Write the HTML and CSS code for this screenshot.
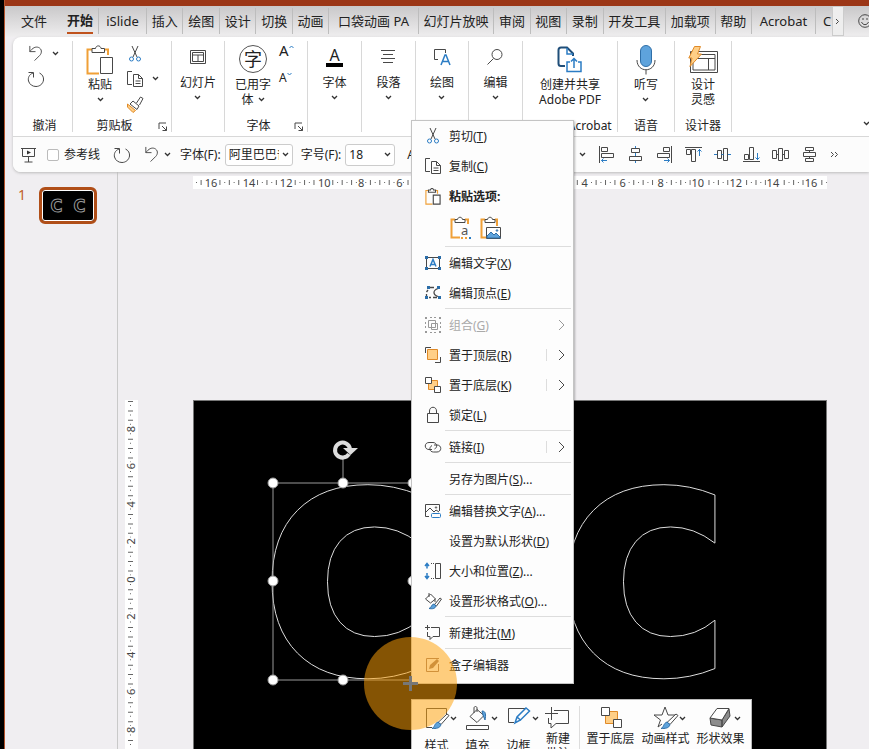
FILE: index.html
```html
<!DOCTYPE html>
<html lang="zh-CN">
<head>
<meta charset="utf-8">
<title>演示文稿</title>
<link rel="stylesheet" href="styles.css">
</head>
<body>
<svg class="sprite" aria-hidden="true">
  <symbol id="chev" viewBox="0 0 7 5"><path d="M1 1l2.500 2.500L6 1" stroke="#333" stroke-width="1.300"/></symbol>
  <symbol id="undo" viewBox="0 0 18 18"><path d="M3 1v6h6M3 7C6 3 9 1.500 12 2.500c4 1.500 4 6 1.500 8.500L8 16.500"/></symbol>
  <symbol id="redo" viewBox="0 0 18 18"><path d="M1.500 2.500h5v5M6 3C2 4.500.8 8 1.500 11c1 3.500 4 5.500 7.500 5.500s7-2.500 7.500-6.500c.3-3-1-5.500-4-7"/></symbol>
  <symbol id="cut" viewBox="0 0 18 18"><path d="M6 1l5 11M12 1L7 12"/><circle class="b" cx="5.500" cy="14" r="2"/><circle class="b" cx="12.500" cy="14" r="2"/></symbol>
  <symbol id="copy" viewBox="0 0 18 18"><path d="M6 14.500H1.500v-13H6M7.500 4.500h5l4 4v8h-9zM12.500 4.500v4h4M9.500 11h5M9.500 13.500h5"/></symbol>
  <symbol id="paste" viewBox="0 0 28 30"><path class="o" d="M8 4.500H1.500v24H13M19 4.500h3V10"/><path class="w" d="M6 7.500v-4h3.500C10 0 14.500 0 15 3.500h3.500v4zM14.500 12.500h12v16h-12z"/></symbol>
  <symbol id="brush" viewBox="0 0 18 18"><path class="of" d="M1.500 9l8 6.500L7 17.500 1.500 12z"/><path class="w" d="M7 6l6 5-2 3.500-7-5.500zM10.500 8l4-6 2.500 1.500-3.500 6.500"/></symbol>
  <symbol id="launch" viewBox="0 0 10 10"><path d="M1 7V1h7M4 4l4.500 4.500M8.500 4.500v4h-4"/></symbol>
  <symbol id="order-back" viewBox="0 0 22 22"><path class="of" d="M5.500 5.500h12v12h-12z"/><path class="w" d="M1.500 1.500h8v8h-8zM13.500 13.500h8v8h-8z"/></symbol>
  <symbol id="pen" viewBox="0 0 26 24"><path class="w" d="M23 8l2 1.500-8 9-3-2z"/><path class="bf" d="M14 16l3 2.500c-1 4-5 4-9 4 3-1 2-5 6-6.500z"/></symbol>
</svg>

<div class="app">
  <div class="titlebar"></div>
  <nav class="tabs" aria-label="功能区">
    <button class="tab file">文件</button><button class="tab active"><span>开始</span></button><button class="tab islide">iSlide</button><button class="tab">插入</button><button class="tab">绘图</button><button class="tab">设计</button><button class="tab">切换</button><button class="tab">动画</button><button class="tab pa">口袋动画 PA</button><button class="tab">幻灯片放映</button><button class="tab">审阅</button><button class="tab">视图</button><button class="tab">录制</button><button class="tab">开发工具</button><button class="tab">加载项</button><button class="tab">帮助</button><button class="tab acro">Acrobat</button><button class="tab cut-tab">C</button>
    <button class="more" aria-label="更多"><svg width="5" height="7" viewBox="0 0 5 7"><path d="M1 1l2.500 2.500L1 6"/></svg></button>
    <button class="smile" aria-label="反馈"><svg width="14" height="14" viewBox="0 0 14 14"><circle cx="7" cy="7" r="6.300"/><path d="M3.500 8c1.500 3.500 5.500 3.500 7 0M5 4v2M9 4v2"/></svg></button>
  </nav>

  <div class="card">
    <div class="ribbon">
      <section class="group g-undo">
        <div class="body stack">
          <div class="line"><button class="ic" aria-label="撤消"><svg width="17" height="17"><use href="#undo"/></svg></button><svg class="ch" width="7" height="5"><use href="#chev"/></svg></div>
          <div class="line"><button class="ic" aria-label="重做"><svg width="18" height="18"><use href="#redo"/></svg></button></div>
        </div>
        <h2>撤消</h2>
      </section>
      <section class="group g-clip">
        <div class="body">
          <button class="big"><i><svg width="28" height="30"><use href="#paste"/></svg></i><span>粘贴</span><em><svg width="7" height="5"><use href="#chev"/></svg></em></button>
          <div class="side">
            <div class="line"><button class="ic" aria-label="剪切"><svg width="18" height="18"><use href="#cut"/></svg></button></div>
            <div class="line"><button class="ic" aria-label="复制"><svg width="18" height="18"><use href="#copy"/></svg></button><svg class="ch" width="7" height="5"><use href="#chev"/></svg></div>
            <div class="line"><button class="ic" aria-label="格式刷"><svg width="18" height="18"><use href="#brush"/></svg></button></div>
          </div>
        </div>
        <h2>剪贴板</h2><svg class="launch" width="10" height="10"><use href="#launch"/></svg>
      </section>
      <section class="group g-s">
        <div class="body"><button class="big med"><i><svg width="16" height="14" viewBox="0 0 16 14"><path d="M.5.5h15v13H.5zM2.500 2.500h11v9h-11zM2.500 5h11M8 5v6.500"/></svg></i><span>幻灯片</span><em><svg width="7" height="5"><use href="#chev"/></svg></em></button></div>
      </section>
      <section class="group g-font">
        <div class="body">
          <button class="big"><i class="zi">字</i><span>已用字</span><span>体 <svg width="7" height="5"><use href="#chev"/></svg></span></button>
          <div class="side sizes">
            <button class="ic" aria-label="增大字号">A<svg class="sup" width="5" height="4" viewBox="0 0 5 4"><path class="b" d="M.5 3l2-2 2 2"/></svg></button>
            <button class="ic small" aria-label="减小字号">A<svg class="sup" width="5" height="4" viewBox="0 0 5 4"><path class="b" d="M.5 1l2 2 2-2"/></svg></button>
          </div>
        </div>
        <h2>字体</h2><svg class="launch" width="10" height="10"><use href="#launch"/></svg>
      </section>
      <section class="group g-m">
        <div class="body"><button class="big med"><i><b class="fonta">A</b></i><span>字体</span><em><svg width="7" height="5"><use href="#chev"/></svg></em></button></div>
      </section>
      <section class="group g-m">
        <div class="body"><button class="big med"><i><svg width="16" height="16" viewBox="0 0 16 16"><path d="M1 1.500h14M3 5.500h10M1 9.500h14M3 13.500h10"/></svg></i><span>段落</span><em><svg width="7" height="5"><use href="#chev"/></svg></em></button></div>
      </section>
      <section class="group g-s">
        <div class="body"><button class="big med"><i><svg width="18" height="18" viewBox="0 0 18 18"><path d="M5 11.500H1.500v-10h11V5"/><path class="b mid" d="M8 17l4-10h1l4 10M9.500 13.500h6"/></svg></i><span>绘图</span><em><svg width="7" height="5"><use href="#chev"/></svg></em></button></div>
      </section>
      <section class="group g-m">
        <div class="body"><button class="big med"><i><svg width="18" height="18" viewBox="0 0 18 18"><circle cx="11" cy="6.500" r="5"/><path d="M7.500 10.500L1.500 16.500"/></svg></i><span>编辑</span><em><svg width="7" height="5"><use href="#chev"/></svg></em></button></div>
      </section>
      <section class="group g-pdf">
        <div class="body"><button class="big"><i><svg width="26" height="28" viewBox="0 0 26 28"><path class="navy" d="M8 20H4c-2 0-2.500-1-2.500-2.500V4c0-2 1-2.500 2.500-2.500h6l6 6V10"/><path class="b mid" d="M10 2v6h6M13 16h-3v9.500h14V16h-3M17 22v-9M14 15.500l3-3 3 3"/></svg></i><span>创建并共享</span><span>Adobe PDF</span></button></div>
        <h2>Adobe Acrobat</h2>
      </section>
      <section class="group g-mic">
        <div class="body"><button class="big"><i><svg width="20" height="30" viewBox="0 0 20 30"><rect class="bf" x="4.500" y=".5" width="11" height="21" rx="5.500"/><path d="M1 15c0 13 18 13 18 0M10 25v4.500"/></svg></i><span>听写</span><em><svg width="7" height="5"><use href="#chev"/></svg></em></button></div>
        <h2>语音</h2>
      </section>
      <section class="group g-mic">
        <div class="body"><button class="big"><i><svg width="30" height="28" viewBox="0 0 30 28"><path d="M2.500 5.500h27v21h-27zM5 8.500h22v15.500H5zM5 12.500h22M20.500 12.500V24"/><path class="of" d="M6.500.5h6L9.500 8h4L2 20.500 4 12H.8z"/></svg></i><span>设计</span><span>灵感</span></button></div>
        <h2>设计器</h2>
      </section>
      <svg class="collapse" width="7" height="5"><use href="#chev"/></svg>
    </div>

    <div class="qat">
      <button class="ic screen" aria-label="放映"><svg width="15" height="16" viewBox="0 0 15 16"><path d="M0 1.500h15M1.500 1.500v8h12v-8M7.500 9.500V15M3.500 15h8"/><path class="k" d="M6 3.500l4 2-4 2z"/></svg></button>
      <label class="check"><input type="checkbox">参考线</label>
      <button class="ic" aria-label="重做"><svg width="18" height="18"><use href="#redo"/></svg></button>
      <button class="ic undo2" aria-label="撤消"><svg width="17" height="17"><use href="#undo"/></svg><svg class="ch" width="7" height="5"><use href="#chev"/></svg></button>
      <label for="ff">字体(F):</label>
      <div class="combo wide"><select id="ff"><option>阿里巴巴普惠体</option></select><svg width="7" height="5"><use href="#chev"/></svg></div>
      <label for="fs">字号(F):</label>
      <div class="combo"><select id="fs"><option>18</option></select><svg width="7" height="5"><use href="#chev"/></svg></div>
      <span class="grow">A</span>
      <div class="aligns">
        <svg width="7" height="5"><use href="#chev"/></svg>
        <button class="ic" aria-label="左对齐"><svg width="17" height="17" viewBox="0 0 17 17"><path d="M1.500 0v17M3.500 1.500h6v4h-6zM3.500 7.500h12v4h-12z"/><path class="b" d="M9 14.500H3.500M5.500 12.500l-2 2 2 2"/></svg></button>
        <button class="ic" aria-label="水平居中"><svg width="17" height="17" viewBox="0 0 17 17"><path d="M4.500 2.500h8v4h-8zM2.500 10.500h12v4h-12z"/><path class="b" d="M8.500 0v2M8.500 7v3M8.500 15v2"/></svg></button>
        <button class="ic" aria-label="右对齐"><svg width="17" height="17" viewBox="0 0 17 17"><path d="M15.500 0v17M7.500 1.500h6v4h-6zM1.500 7.500h12v4h-12z"/><path class="b" d="M8 14.500h5.500M11.500 12.500l2 2-2 2"/></svg></button>
        <button class="ic" aria-label="顶端对齐"><svg width="17" height="17" viewBox="0 0 17 17"><path d="M0 1.500h17M1.500 3.500h4v5h-4zM6.500 3.500h4v12h-4z"/><path class="b" d="M14.500 10V3M12.500 5.500l2-2 2 2"/></svg></button>
        <button class="ic" aria-label="垂直居中"><svg width="17" height="17" viewBox="0 0 17 17"><path d="M3.500 4.500h4v8h-4zM9.500 2.500h4v12h-4z"/><path class="b" d="M0 8.500h3M7.500 8.500h2M14 8.500h3"/></svg></button>
        <button class="ic" aria-label="底端对齐"><svg width="17" height="17" viewBox="0 0 17 17"><path d="M0 15.500h17M1.500 8.500h4v5h-4zM6.500 1.500h4v12h-4z"/><path class="b" d="M14.500 7v7M12.500 11.500l2 2 2-2"/></svg></button>
        <button class="ic" aria-label="横向分布"><svg width="17" height="17" viewBox="0 0 17 17"><path d="M.5 4.500h4v8h-4zM6.500 2.500h4v12h-4zM12.500 4.500h4v8h-4zM4.500 8.500h2M10.500 8.500h2"/></svg></button>
        <button class="ic" aria-label="纵向分布"><svg width="17" height="17" viewBox="0 0 17 17"><path d="M4.500 1.500h8v3h-8zM2.500 6.500h12v4h-12zM4.500 12.500h8v3h-8zM8.500 4.500v2M8.500 10.500v2"/></svg></button>
        <button class="ic" aria-label="更多命令"><svg width="9" height="7" viewBox="0 0 9 7"><path d="M1 1l2.500 2.500L1 6M5 1l2.500 2.500L5 6"/></svg></button>
      </div>
    </div>
  </div>

  <main class="work">
    <aside class="thumbs">
      <span class="num">1</span>
      <button class="thumb" aria-label="幻灯片 1"><span>C</span><span>C</span></button>
    </aside>
    <div class="stage">
      <svg class="hruler" viewBox="-1 0 633 13" preserveAspectRatio="xMidYMid slice">
        <path class="tick" d="M6.600 6.500H632" stroke-width="5" stroke-dasharray="1 8.390"/><path class="tick" d="M2 6.500H632" stroke-width="1" stroke-dasharray="1 8.390"/>
        <g class="pad"><path d="M10 6.500h15M47 6.500h15M85 6.500h15M122 6.500h15M163 6.500h7M201 6.500h7M238 6.500h7M276 6.500h7M313 6.500h7M350 6.500h7M387 6.500h7M424 6.500h7M462 6.500h7M496 6.500h15M534 6.500h15M571 6.500h15M609 6.500h15"/></g>
        <g class="n"><text x="17" y="11">16</text><text x="55" y="11">14</text><text x="92" y="11">12</text><text x="130" y="11">10</text><text x="167" y="11">8</text><text x="205" y="11">6</text><text x="242" y="11">4</text><text x="279" y="11">2</text><text x="316" y="11">0</text><text x="353" y="11">2</text><text x="390" y="11">4</text><text x="428" y="11">6</text><text x="466" y="11">8</text><text x="503" y="11">10</text><text x="541" y="11">12</text><text x="578" y="11">14</text><text x="616" y="11">16</text></g>
      </svg>
      <svg class="vruler" viewBox="0 0 13 348" preserveAspectRatio="xMidYMin slice">
        <path class="tick" d="M5.500 1V348" stroke-width="5" stroke-dasharray="1 8.390"/><path class="tick" d="M5.500 5V348" stroke-width="1" stroke-dasharray="1 8.390"/>
        <g class="pad"><path d="M5.500 25v7M5.500 62v7M5.500 100v7M5.500 137v7M5.500 175v7M5.500 212v7M5.500 250v7M5.500 287v7M5.500 325v7"/></g>
        <g class="n"><text transform="translate(10 29) rotate(-90)">8</text><text transform="translate(10 66) rotate(-90)">6</text><text transform="translate(10 104) rotate(-90)">4</text><text transform="translate(10 141) rotate(-90)">2</text><text transform="translate(10 179) rotate(-90)">0</text><text transform="translate(10 216) rotate(-90)">2</text><text transform="translate(10 254) rotate(-90)">4</text><text transform="translate(10 291) rotate(-90)">6</text><text transform="translate(10 329) rotate(-90)">8</text></g>
      </svg>
      <svg class="slide" viewBox="0 0 634 348" preserveAspectRatio="xMinYMin slice">
        <text class="letter" x="65" y="273">c</text><text class="letter" x="361" y="273">c</text>
        <path class="sel" d="M79 82h140v197H79zM149 57v25"/>
        <g class="dots"><circle cx="79" cy="82" r="5"/><circle cx="149" cy="82" r="5"/><circle cx="219" cy="82" r="5"/><circle cx="79" cy="180" r="5"/><circle cx="219" cy="180" r="5"/><circle cx="79" cy="279" r="5"/><circle cx="149" cy="279" r="5"/></g>
        <path class="rot" d="M155 53a7.500 7.500 0 1 1 1-5"/><path class="rota" d="M149 47h15l-7.500 7z"/>
      </svg>
    </div>
  </main>
</div>

<div class="menu" role="menu">
  <button><i><svg width="18" height="18"><use href="#cut"/></svg></i>剪切(<u>T</u>)</button>
  <button><i><svg width="18" height="18"><use href="#copy"/></svg></i>复制(<u>C</u>)</button>
  <div class="head"><i><svg width="16" height="17" viewBox="0 0 28 30"><path class="o fat" d="M8 4.500H1.500v24H13M19 4.500h3V10"/><path class="w fat" d="M6 7.500v-4h3.500C10 0 14.500 0 15 3.500h3.500v4zM14.500 12.500h12v16h-12z"/></svg></i>粘贴选项:</div>
  <div class="opts">
    <button aria-label="只保留文本"><svg width="22" height="24" viewBox="0 0 22 24"><path class="o" d="M5 3.500H1.500v18H10M15 3.500h3V8"/><path class="w" d="M5 6.500v-3h2.500C8 .5 12 .5 12.500 3.500H15v3z"/><text class="pa-a" x="11" y="19">a</text><path class="o fat" d="M11 22h2M15 22h2"/><path class="b fat" d="M19 22h2"/></svg></button>
    <button aria-label="图片"><svg width="22" height="24" viewBox="0 0 22 24"><path class="o" d="M5 3.500H1.500v18H6M15 3.500h2V10"/><path class="w" d="M5 6.500v-3h2.500C8 .5 12 .5 12.500 3.500H15v3zM6.500 11.500h14v11h-14z"/><path class="bf" d="M7 20l4-4 3 3 2-2 4 4v1H7z"/><circle class="bf" cx="17" cy="14.500" r=".8"/></svg></button>
  </div>
  <hr>
  <button><i><svg width="18" height="16" viewBox="0 0 18 16"><path d="M2.500 2.500h13v11h-13z"/><path class="bk" d="M1 1h3v3H1zM14 1h3v3h-3zM1 12h3v3H1zM14 12h3v3h-3z"/><path class="b mid" d="M6 11.500l3-7 3 7M7 9.500h4"/></svg></i>编辑文字(<u>X</u>)</button>
  <button><i><svg width="18" height="16" viewBox="0 0 18 16"><path d="M6 2.500h4M4 5L2.500 7M2.500 9v2M5 12.500h2M9 12.500h4M14 3.500c-3 1-4 2-4 4s1 3 4 4" stroke-width="1.300"/><path class="bk" d="M3 1h3v3H3zM13 1h3v3h-3zM1 11h3v3H1zM14 11h3v3h-3z"/></svg></i>编辑顶点(<u>E</u>)</button>
  <hr>
  <button disabled><i><svg width="18" height="18" viewBox="0 0 18 18"><path d="M4.500 4.500h7v7h-7zM7.500 7.500h6v6h-6z"/><path d="M1 1h2v2H1zM15 1h2v2h-2zM15 15h2v2h-2zM1 15h2v2H1z" fill="#999" stroke="none"/><path d="M6 1.500h6M6 16.500h6M1.500 6v6M16.500 6v6" stroke-dasharray="2 2"/></svg></i>组合(<u>G</u>)<svg class="arr" width="8" height="12" viewBox="0 0 8 12"><path d="M1 1l5 5-5 5"/></svg></button>
  <button><i><svg width="18" height="18" viewBox="0 0 18 18"><path d="M1.500 7V1.500H7M11 16.500h5.500V11"/><path class="of" d="M3.500 3.500h10v10h-10z"/></svg></i>置于顶层(<u>R</u>)<svg class="arr split" width="8" height="12" viewBox="0 0 8 12"><path d="M1 1l5 5-5 5"/></svg></button>
  <button><i><svg width="18" height="18" viewBox="0 0 18 18"><path class="of" d="M4.500 4.500h9v9h-9z"/><path class="w" d="M1.500 1.500h6v6h-6zM10.500 10.500h6v6h-6z"/></svg></i>置于底层(<u>K</u>)<svg class="arr split" width="8" height="12" viewBox="0 0 8 12"><path d="M1 1l5 5-5 5"/></svg></button>
  <button><i><svg width="14" height="18" viewBox="0 0 14 18"><path d="M1.500 7.500h11v9h-11zM3.500 7.500V5c0-5 7-5 7 0v2.500"/></svg></i>锁定(<u>L</u>)</button>
  <hr>
  <button><i><svg width="18" height="14" viewBox="0 0 18 14"><path d="M8 9.500H5c-5 0-5-7 0-7h4c4 0 5 5 1.500 6.500M10 5h3c5 0 5 7 0 7H9.500C5.500 12 4.500 7.500 8 5.500"/></svg></i>链接(<u>I</u>)<svg class="arr split" width="8" height="12" viewBox="0 0 8 12"><path d="M1 1l5 5-5 5"/></svg></button>
  <hr>
  <button><i></i>另存为图片(<u>S</u>)...</button>
  <hr>
  <button><i><svg width="18" height="16" viewBox="0 0 18 16"><path d="M5 13.500H1.500v-12h14V8M2 9l4-4 4 4 2-2 3 2"/><circle cx="12" cy="4.500" r=".7"/><rect class="b" x="7.500" y="10.500" width="9" height="4" rx="1"/></svg></i>编辑替换文字(<u>A</u>)...</button>
  <button><i></i>设置为默认形状(<u>D</u>)</button>
  <button><i><svg width="18" height="18" viewBox="0 0 18 18"><path class="b mid" d="M3 1.500v5M1 4l2-2.500L5 4M3 11v5.500M1 14l2 2.500L5 14"/><path d="M11.500 1.500h5v15h-5z"/><path d="M7 1.500h3M7 16.500h3" stroke-dasharray="1 1"/></svg></i>大小和位置(<u>Z</u>)...</button>
  <button><i><svg width="18" height="18" viewBox="0 0 18 18"><path class="w" d="M1.500 7l5-5 5 5-5 4zM5 1v4M11 7v3"/><path class="w" d="M16 6l1.500 1-5 7-2-1.500z"/><path class="bf" d="M10 12l2 2c-1 3-4 3-7 2.500 3-1 2-4 5-4.500z"/></svg></i>设置形状格式(<u>O</u>)...</button>
  <hr>
  <button><i><svg width="18" height="18" viewBox="0 0 18 18"><path d="M7 3.500h8.500v9H9L6 15.500v-3H3.500V8M3.500 1v5M1 3.500h5"/></svg></i>新建批注(<u>M</u>)</button>
  <hr>
  <button><i><svg width="16" height="16" viewBox="0 0 16 16"><path class="mute" d="M13.500 7v7.500H1.500v-13H14"/><path class="mutef" d="M4 12l1-4 7-6 2 2-6 7z"/></svg></i>盒子编辑器</button>
</div>

<div class="mini" role="toolbar">
  <button class="m1"><i><svg width="26" height="24" viewBox="0 0 26 24"><path d="M8 21.500H2.500v-19h20V8"/><use href="#pen" width="26" height="24"/></svg><svg class="c" width="7" height="5"><use href="#chev"/></svg></i><span>样式</span></button>
  <button class="m1"><i><svg width="26" height="24" viewBox="0 0 26 24"><path d="M5 10.500l7-7 7 6-7 7zM9 7V2c0-2 3-2 3 0v4"/><path class="bf" d="M17 5c4 0 4 4 3 9l-2-5z"/><path class="w" d="M1.500 19.500h22v4h-22z"/></svg><svg class="c" width="7" height="5"><use href="#chev"/></svg></i><span>填充</span></button>
  <button class="m1"><i><svg width="26" height="24" viewBox="0 0 26 24"><path d="M8 16.500H2.500v-14h18"/><path class="b mid" d="M9 17l2-6 9-9 3.500 3-9 9zM11 11l4 3.500"/></svg><svg class="c" width="7" height="5"><use href="#chev"/></svg></i><span>边框</span></button>
  <button class="two"><i><svg width="26" height="24" viewBox="0 0 26 24"><path d="M9 4.500h14.500v13H11l-5 4.500v-4.500H3.500V12M6.500 1v13M0 7.500h13"/></svg></i><span>新建<br>批注</span></button>
  <span class="bar"></span>
  <button class="two w4"><i><svg width="22" height="22"><use href="#order-back"/></svg></i><span>置于底层</span></button>
  <button class="two w4"><i><svg width="26" height="24" viewBox="0 0 26 24"><path d="M12 1l3 8h8l-6 5M12 1L9 9H1l6.500 5L5 21l4-3"/><use href="#pen" width="26" height="24"/></svg><svg class="c" width="7" height="5"><use href="#chev"/></svg></i><span>动画样式</span></button>
  <button class="two w4"><i><svg width="26" height="24" viewBox="0 0 26 24"><path class="dark" d="M2 12l12 2v7l-11-2zM14 14l7-11 1 7-8 11z"/><path class="w" d="M9 2.500h12L14 14 2 12z"/></svg><svg class="c" width="7" height="5"><use href="#chev"/></svg></i><span>形状效果</span></button>
</div>

<div class="halo"><svg width="15" height="15" viewBox="0 0 15 15"><path d="M7.500 0v15M0 7.500h15"/></svg></div>
</body>
</html>
```
FILE: styles.css
```css
* { box-sizing: border-box; }
body {
  margin: 0;
  height: 100vh;
  overflow: hidden;
  position: relative;
  background: #000;
  color: #222;
  font: 12px/15px "Noto Sans", "Noto Sans CJK SC", sans-serif;
}
button {
  appearance: none;
  border: 0;
  padding: 0;
  margin: 0;
  background: none;
  color: inherit;
  font: inherit;
}
i, em { font-style: normal; }
svg { fill: none; stroke: #484848; stroke-width: 1; flex: none; display: block; }
.sprite { position: absolute; width: 0; height: 0; }
.b { stroke: #2b7cc4; }
.o { stroke: #f0a037; stroke-width: 2; }
.w { fill: #fff; }
.k { fill: #333; stroke: none; }
.of { fill: #ffcf87; stroke: #e08a28; }
.bf { fill: #5ea3dc; stroke: #2f6fa8; }
.bk { fill: #2b6da8; stroke: none; }
.navy { stroke: #1f4e79; stroke-width: 2; }
.mid { stroke-width: 1.5; }
.dark { fill: #8c8c8c; }
.fat { stroke-width: 2; }
.mute { stroke: #a08070; }
.mutef { fill: #a08070; stroke: none; }

.app { height: 100%; margin-left: 4px; display: flex; flex-direction: column; background: #f0eef1; border-left: 1px solid #b4532c; }
.titlebar { height: 6px; background: #9b3616; flex: none; }

.tabs { height: 31px; flex: none; display: flex; align-items: flex-start; background: linear-gradient(#c9c8c9, #efeeef); font-size: 13px; overflow: hidden; }
.tab { height: 26px; margin-top: 2px; padding: 0 4px; border-right: 1px solid #bdbdbd; line-height: 24px; flex: 1 1 auto; white-space: nowrap; }
.tab.file { flex: none; width: 58px; border: 0; padding-left: 4px; }
.tab.active { flex: none; width: 36px; font-weight: 700; }
.tab.active span { display: block; width: 26px; border-bottom: 2px solid #c0521c; }
.tab.islide { flex: none; width: 48px; }
.tab.pa { padding: 0 8px; }
.tab.acro { flex: none; width: 64px; }
.tab.cut-tab { flex: none; width: 16px; padding: 0 0 0 7px; border: 0; overflow: hidden; text-align: left; }
.more { width: 12px; height: 30px; background: #eee; border: 1px solid #ccc; display: grid; place-items: center; flex: none; }
.smile { width: 25px; padding: 8px 0 0 14px; flex: none; overflow: hidden; }

.card { margin-left: 8px; flex: none; background: #fff; border-radius: 8px 0 0 8px; box-shadow: 0 1px 3px #bbb; z-index: 1; }
.ribbon { display: flex; height: 99px; padding: 4px 0; position: relative; }
.group { position: relative; display: flex; flex-direction: column; border-right: 1px solid #d8d8d8; flex: none; }
.group h2 { margin: 0; font: inherit; text-align: center; height: 14px; white-space: nowrap; line-height: 15px; }
.group .body { flex: 1; display: flex; justify-content: center; }
.g-undo { width: 60px; }
.g-undo h2 { padding-left: 4px; }
.g-clip { width: 99px; }
.g-clip h2, .g-font h2 { padding-right: 15px; }
.g-m { width: 54px; }
.g-s { width: 53px; }
.g-font { width: 83px; }
.g-pdf { width: 95px; }
.g-mic { width: 57px; }
.launch { position: absolute; right: 3px; bottom: 0; }
.collapse { position: absolute; right: -1px; bottom: 10px; }
.ic { display: flex; align-items: center; justify-content: center; }
.line { display: flex; align-items: center; height: 25px; gap: 8px; }
.stack { flex-direction: column; padding-left: 14px; justify-content: flex-start !important; }
.side { width: 32px; margin-left: 12px; }
.sizes { width: 18px; margin-left: 8px; padding-top: 2px; }
.sizes .ic { font-size: 15px; height: 22px; align-items: flex-start; }
.sizes .small { font-size: 12px; margin-top: 5px; }
.sup { margin-top: 2px; }
.big { display: flex; flex-direction: column; align-items: center; align-self: flex-start; white-space: nowrap; }
.big > i { height: 35px; display: grid; place-items: center; margin-top: 1px; }
.big span { display: flex; align-items: center; gap: 4px; }
.big em { height: 15px; display: grid; place-items: center; }
.med > i { height: 30px; margin-bottom: 3px; }
.big > i.zi { width: 28px; height: 28px; margin: 4px 0; border: 1px solid #555; border-radius: 50%; font-size: 18px; line-height: 24px; }
.fonta { font: 400 16px/15px "Noto Sans", sans-serif; border-bottom: 4px solid #000; padding: 0 3px; }

.qat { height: 36px; border-top: 1px solid #d8d8d8; background: #fcfcfc; border-radius: 0 0 0 8px; display: flex; align-items: center; padding-left: 8px; white-space: nowrap; }
.check { display: flex; align-items: center; gap: 5px; margin: 0 13px 0 11px; }
.check input { appearance: none; width: 12px; height: 12px; margin: 0; border: 1px solid #bbb; border-radius: 2px; background: #fff; }
.undo2 { gap: 4px; margin: 0 9px 0 12px; }
.combo { width: 50px; height: 22px; border: 1px solid #ccc; border-radius: 3px; background: #fff; display: flex; align-items: center; justify-content: space-between; margin: 0 8px 0 4px; padding: 0 3px; }
.combo.wide { width: 68px; }
.combo select { appearance: none; border: 0; background: none; font: inherit; color: inherit; padding: 0; width: 50px; overflow: hidden; text-overflow: clip; flex: 0 1 50px; min-width: 0; }
.aligns { margin-left: auto; margin-right: 30px; display: flex; align-items: center; gap: 12px; }
.grow { padding-left: 4px; }

.work { flex: 1; min-height: 0; display: flex; }
.thumbs { width: 113px; flex: none; display: flex; align-items: flex-start; border-right: 1px solid #c9c9c9; padding: 15px 0 0 13px; }
.num { color: #c0602a; font-size: 14px; width: 21px; }
.thumb { width: 58px; height: 37px; border: 3px solid #b04e18; border-radius: 6px; background: #000; box-shadow: inset 0 0 0 1px #fff; display: flex; align-items: center; justify-content: center; gap: 11px; }
.thumb span { font: 700 18px/18px "DejaVu Sans Condensed", "DejaVu Sans", sans-serif; color: #000; -webkit-text-stroke: 1px #999; }
.stage { flex: 1; min-width: 0; display: grid; grid-template-columns: 7px 13px 55px 1fr 42px; grid-template-rows: 4px 13px 211px 1fr; }
.hruler { grid-area: 2 / 4; width: 100%; height: 13px; background: #fff; }
.vruler { grid-area: 4 / 2; width: 13px; height: 100%; background: #fff; }
.slide { grid-area: 4 / 4; width: 100%; height: 100%; background: #000; border: 1px solid #777; border-bottom: 0; overflow: hidden; }
.tick { stroke: #666; }
.pad { stroke: #fff; stroke-width: 12; }
.n { fill: #444; stroke: none; font: 11px "Noto Sans", sans-serif; text-anchor: middle; }
.letter { fill: none; stroke: #ddd; font: 700 338px "DejaVu Sans Condensed", "DejaVu Sans", sans-serif; }
.sel { stroke: #999; }
.dots { fill: #fff; stroke: #999; }
.rot { stroke: #ddd; stroke-width: 4; }
.rota { fill: #ddd; stroke: none; }

.menu { position: absolute; left: 411px; top: 120px; width: 163px; padding-bottom: 3px; background: #fdfdfd; border: 1px solid #c4c4c4; box-shadow: 1px 1px 2px #0004; z-index: 3; }
.menu > button, .head { display: flex; align-items: center; width: 100%; height: 30px; padding: 0 7px 0 12px; white-space: nowrap; text-align: left; }
.menu i { width: 18px; margin-right: 7px; flex: none; display: grid; place-items: center; }
.menu button:disabled { color: #aaa; }
.menu button:disabled svg { stroke: #999; }
.head { font-weight: 700; }
.opts { display: flex; gap: 8px; height: 35px; padding: 5px 0 0 38px; align-items: flex-start; }
.menu hr { height: 1px; border: 0; background: #ddd; margin: 0 2px 1px 33px; }
.arr { margin-left: auto; }
.split { box-shadow: -11px 0 #fdfdfd, -12px 0 #ddd; }
.pa-a { fill: #555; stroke: none; font: 13px "Noto Sans", sans-serif; }

.mini { position: absolute; left: 411px; top: 699px; height: 70px; width: 341px; display: flex; background: #fdfdfd; border: 1px solid #bbb; padding: 6px 2px 0 4px; z-index: 3; }
.mini button { width: 41px; display: flex; flex-direction: column; align-items: center; white-space: nowrap; }
.mini i { position: relative; height: 24px; display: block; }
.mini .c { position: absolute; left: 100%; top: 10px; }
.mini .m1 span { margin-top: 8px; }
.mini .two { width: 38px; }
.mini .two span { margin-top: 1px; }
.mini .w4 { width: 55px; }
.bar { width: 1px; background: #ddd; margin: 0 3px 0 2px; }

.halo { position: absolute; left: 364px; top: 637px; width: 93px; height: 93px; border-radius: 50%; background: rgba(255, 162, 8, .52); display: grid; place-items: center; z-index: 4; pointer-events: none; }
.halo svg { stroke: #777; stroke-width: 3; }
```
